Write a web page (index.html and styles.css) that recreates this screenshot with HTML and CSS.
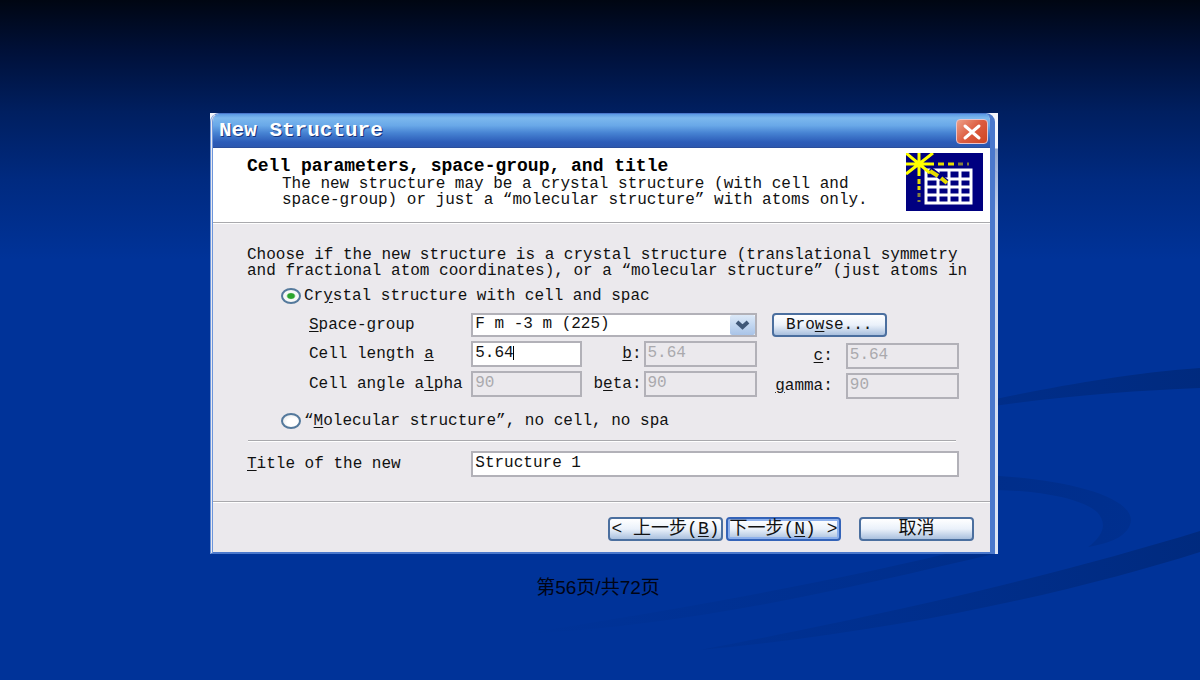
FILE: index.html
```html
<!DOCTYPE html>
<html lang="zh-CN">
<head>
<meta charset="utf-8">
<title>New Structure</title>
<link rel="stylesheet" href="styles.css">
</head>
<body>
<svg class="swoosh" viewBox="0 0 1200 680" preserveAspectRatio="none" aria-hidden="true">
  <defs>
    <linearGradient id="fade" gradientUnits="userSpaceOnUse" x1="520" y1="0" x2="1200" y2="0">
      <stop offset="0" stop-color="#002a80" stop-opacity="0"/>
      <stop offset="0.5" stop-color="#002a80" stop-opacity="0.4"/>
      <stop offset="1" stop-color="#002878" stop-opacity="0.8"/>
    </linearGradient>
    <linearGradient id="ring" gradientUnits="userSpaceOnUse" x1="980" y1="0" x2="1130" y2="0">
      <stop offset="0" stop-color="#002a80" stop-opacity="0.6"/>
      <stop offset="1" stop-color="#002a80" stop-opacity="0.4"/>
    </linearGradient>
  </defs>
  <path fill="url(#fade)" d="M1200 368C1120 374 1060 386 980 402V408C1060 396 1130 391 1200 388Z"/>
  <path fill="url(#ring)" d="M980 475C1060 478 1130 495 1131 520C1130 535 1112 543 1088 547C1103 536 1108 524 1097 512C1080 497 1030 489 980 490Z"/>
  <path fill="url(#fade)" d="M1200 531C1080 568 920 608 700 650C900 632 1080 590 1200 552Z"/>
  <path fill="url(#fade)" d="M970 548C850 578 700 606 520 634C690 626 840 590 998 553Z"/>
</svg>
<main class="slide">
  <section class="frame" aria-label="New Structure">
    <div class="dialog">
      <header class="titlebar">
        <h1 class="caption">New Structure</h1>
        <button class="close" type="button" aria-label="Close">
          <svg viewBox="0 0 30 24" width="30" height="24"><path d="M8 6L22 18M22 6L8 18" stroke="#fff" stroke-width="3" stroke-linecap="round"/></svg>
        </button>
      </header>
      <div class="intro">
        <div class="intro-text">
          <h2 class="heading">Cell parameters, space-group, and title</h2>
          <p class="sub">The new structure may be a crystal structure (with cell and<br>space-group) or just a “molecular structure” with atoms only.</p>
        </div>
        <svg class="logo" viewBox="0 0 77 58" width="77" height="58" aria-hidden="true">
          <rect width="77" height="58" fill="#000080"/>
          <path d="M20 17H65V50H20ZM32 16V50M43 16V50M54 16V50M20 26H65M20 34H65M20 42H65" fill="none" stroke="#fff" stroke-width="3"/>
          <path d="M24 16L41 29" stroke="#000080" stroke-width="5"/>
          <path d="M0 11H28M13 0V23M0 0L24 20M27 0L0 21" stroke="#ff0" stroke-width="3"/>
          <path d="M24 18L32 23M35 25L41 30" stroke="#e6dc00" stroke-width="4"/>
          <path d="M32 11H38M42 11H48M13 26V31M13 33V37" stroke="#e6dc00" stroke-width="3"/>
          <path d="M52 11H57M61 11H63M13 40V44M13 47V49" stroke="#85803c" stroke-width="3"/>
        </svg>
      </div>
      <form class="body">
        <p class="lead">Choose if the new structure is a crystal structure (translational symmetry<br>and fractional atom coordinates), or a “molecular structure” (just atoms in</p>
        <div class="option">
          <input class="radio" type="radio" name="kind" id="crystal" checked>
          <label for="crystal">Cr<u>y</u>stal structure with cell and spac</label>
        </div>
        <div class="grid">
          <label for="group"><u>S</u>pace-group</label>
          <div class="combo">
            <select class="field" id="group"><option>F m -3 m (225)</option></select>
            <span class="arrow"><svg viewBox="0 0 25 20" width="25" height="20"><path d="M7 7L12.500 12L18 7" fill="none" stroke="#405878" stroke-width="4"/></svg></span>
          </div>
          <button class="button browse" type="button">Bro<u>w</u>se...</button>

          <label for="a">Cell length <u>a</u></label>
          <div class="editing"><input class="field" id="a" type="text" value="5.64"><i class="caret"></i></div>
          <label class="right" for="b"><u>b</u>:</label>
          <input class="field" id="b" type="text" value="5.64" disabled>
          <label class="right spaced low" for="c"><u>c</u>:</label>
          <input class="field low" id="c" type="text" value="5.64" disabled>

          <label for="alpha">Cell angle a<u>l</u>pha</label>
          <input class="field" id="alpha" type="text" value="90" disabled>
          <label class="right" for="beta">b<u>e</u>ta:</label>
          <input class="field" id="beta" type="text" value="90" disabled>
          <label class="right spaced low" for="gamma"><u>g</u>amma:</label>
          <input class="field low" id="gamma" type="text" value="90" disabled>
        </div>
        <div class="option">
          <input class="radio" type="radio" name="kind" id="molecular">
          <label for="molecular">“<u>M</u>olecular structure”, no cell, no spa</label>
        </div>
        <hr class="rule">
        <div class="title-row">
          <label for="title"><u>T</u>itle of the new</label>
          <input class="field" id="title" type="text" value="Structure 1">
        </div>
      </form>
      <footer class="actions">
        <button class="button" type="button">&lt; 上一步(<u>B</u>)</button>
        <button class="button default" type="button">下一步(<u>N</u>) &gt;</button>
        <button class="button cancel" type="button">取消</button>
      </footer>
    </div>
  </section>
  <p class="page">第56页/共72页</p>
</main>
</body>
</html>
```
FILE: styles.css
```css
* { box-sizing: border-box; }

body {
  margin: 0;
  min-height: 100vh;
  background: linear-gradient(#000612 0, #001038 50px, #001f60 112px, #002a80 180px, #003399 260px) #003399;
  color: #111;
  font: 16px/16px "Liberation Mono", "Noto Sans CJK SC", monospace;
}

h1, h2, p { margin: 0; }

u { text-underline-offset: 2px; }

.swoosh {
  position: absolute;
  inset: 0;
  width: 100%;
  height: 100%;
}

.slide {
  position: relative;
  display: flex;
  flex-direction: column;
  align-items: center;
  padding: 113px 0 0 8px;
}

.frame {
  width: min(788px, 98%);
  padding-right: 3px;
  background: linear-gradient(#f4f6fc 0, #f4f6fc 35px, #8fa6d0 36px, #c8d4ec 100px, #dfe6f4 100%);
}

.dialog {
  border: solid #4a78cc;
  border-width: 1px 5px 2px 3px;
  border-left: 3px double #6d96dc;
  border-radius: 9px 9px 0 0;
  background: #ebe9ed;
  overflow: hidden;
}

.titlebar {
  display: flex;
  align-items: center;
  justify-content: space-between;
  height: 34px;
  padding: 1px 2px 0 6px;
  border-bottom: 1px solid #2a4e9c;
  background: linear-gradient(#5a9ae4 0, #7cb8ee 12%, #69a8e8 35%, #4682d2 58%, #2c5cb8 85%, #2b57b0 100%);
}

.caption {
  color: #fff;
  font-size: 21px;
  line-height: 24px;
  text-shadow: 1px 1px #16337c;
}

.close {
  width: 32px;
  height: 25px;
  padding: 0;
  border: 1px solid #e8c4cc;
  border-radius: 4px;
  background: linear-gradient(135deg, #eda088, #dc5c40 50%, #cf4522);
}

.close svg { display: block; }

.intro {
  display: flex;
  justify-content: space-between;
  min-height: 75px;
  padding: 5px 7px 10px 34px;
  border-bottom: 1px solid #a9a9ad;
  background: #fff;
}

.heading {
  padding-top: 3px;
  font-size: 18px;
  line-height: 20px;
  color: #000;
}

.sub { padding-left: 35px; white-space: nowrap; }

.logo { flex: none; }

.body {
  padding: 23px 31px 24px 34px;
  border-top: 1px solid #fff;
  border-bottom: 1px solid #a9a9ad;
}

.lead { white-space: nowrap; }

.option {
  display: flex;
  align-items: center;
  gap: 3px;
  height: 34px;
  padding-left: 34px;
}

.radio {
  appearance: none;
  width: 20px;
  height: 16px;
  margin: 0;
  border: 2px solid #54799c;
  border-radius: 50%;
  background: radial-gradient(ellipse at 60% 60%, #fff 40%, #dcdfe2);
}

.radio:checked { background: radial-gradient(ellipse, #2ca52c 0, #2ca52c 28%, #f7f8f7 42%); }

.grid {
  display: grid;
  grid-template-columns: 162fr 111fr 61fr 113fr 89fr 113fr;
  row-gap: 4px;
  align-items: center;
  margin-bottom: 7px;
  padding-left: 62px;
  white-space: nowrap;
}

.field {
  width: 100%;
  min-width: 0;
  height: 26px;
  margin: 0;
  padding: 0 3px 3px 2px;
  border: 2px solid #b2b1b8;
  border-radius: 0;
  background: #fff;
  color: #111;
  font: inherit;
}

.field:disabled { background: #ebe9ed; color: #aaa9ad; opacity: 1; }

.combo {
  position: relative;
  grid-column: 2 / 5;
}

.combo .field { display: block; height: 24px; appearance: none; }

.arrow {
  position: absolute;
  top: 2px;
  right: 2px;
  border-radius: 2px;
  background: linear-gradient(#dce9f8, #a9c4e8);
  pointer-events: none;
}

.arrow svg { display: block; }

.editing { position: relative; }
.editing .field { display: block; }

.caret {
  position: absolute;
  top: 5px;
  left: 42px;
  width: 1px;
  height: 14px;
  background: #000;
}

.right { text-align: right; padding-right: 2px; }
.spaced { padding-right: 13px; }
.low { position: relative; top: 2px; }

.button {
  width: 115px;
  height: 24px;
  padding: 0;
  border: 2px solid #4b6f9f;
  border-radius: 4px;
  background: linear-gradient(#fff, #eaf1fa 50%, #a9c0de);
  color: #111;
  font: inherit;
  white-space: nowrap;
}

.browse {
  grid-column: 5 / 7;
  margin-left: 15px;
}

.default { border-color: #3463b8; box-shadow: inset 0 0 0 2px #8db0ec; }

.rule {
  height: 2px;
  margin: 2px 3px 9px 1px;
  border: 0;
  border-top: 1px solid #a9a9ad;
  background: #fff;
}

.title-row {
  display: grid;
  grid-template-columns: 224fr 487fr;
  align-items: center;
}

.actions {
  display: flex;
  justify-content: flex-end;
  gap: 3px;
  padding: 14px 16px 11px;
  border-top: 1px solid #fff;
  font-size: 18px;
}

.cancel { margin-left: 15px; }

.page {
  margin-top: 23px;
  padding-right: 12px;
  color: #000414;
  font: 19px/22px "Liberation Sans", "Noto Sans CJK SC", sans-serif;
}
```
